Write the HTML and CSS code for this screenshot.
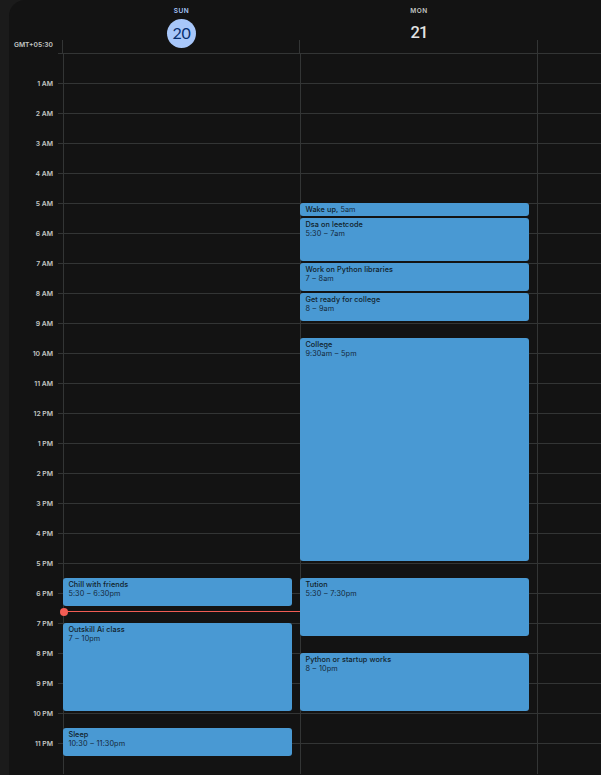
FILE: index.html
```html
<!DOCTYPE html>
<html lang="en">
<head>
<meta charset="utf-8">
<title>Calendar</title>
<link rel="stylesheet" href="styles.css">
</head>
<body>
<main class="calendar">
  <header class="head">
    <div class="zone">GMT+05:30</div>
    <div class="day today"><span class="name">SUN</span><span class="date">20</span></div>
    <div class="day"><span class="name">MON</span><span class="date">21</span></div>
    <div class="day last"></div>
  </header>
  <div class="body">
    <div class="hours">
      <span>1 AM</span><span>2 AM</span><span>3 AM</span><span>4 AM</span><span>5 AM</span><span>6 AM</span><span>7 AM</span><span>8 AM</span><span>9 AM</span><span>10 AM</span><span>11 AM</span><span>12 PM</span><span>1 PM</span><span>2 PM</span><span>3 PM</span><span>4 PM</span><span>5 PM</span><span>6 PM</span><span>7 PM</span><span>8 PM</span><span>9 PM</span><span>10 PM</span><span>11 PM</span>
    </div>
    <div class="stub"></div>
    <div class="column">
      <div class="event" style="grid-row: 36 / span 2"><b>Chill with friends</b><span>5:30 – 6:30pm</span></div>
      <div class="event" style="grid-row: 39 / span 6"><b>Outskill Ai class</b><span>7 – 10pm</span></div>
      <div class="event" style="grid-row: 46 / span 2"><b>Sleep</b><span>10:30 – 11:30pm</span></div>
      <div class="now"></div>
    </div>
    <div class="column">
      <div class="event short" style="grid-row: 11 / span 1"><b>Wake up,</b> <span>5am</span></div>
      <div class="event" style="grid-row: 12 / span 3"><b>Dsa on leetcode</b><span>5:30 – 7am</span></div>
      <div class="event" style="grid-row: 15 / span 2"><b>Work on Python libraries</b><span>7 – 8am</span></div>
      <div class="event" style="grid-row: 17 / span 2"><b>Get ready for college</b><span>8 – 9am</span></div>
      <div class="event" style="grid-row: 20 / span 15"><b>College</b><span>9:30am – 5pm</span></div>
      <div class="event" style="grid-row: 36 / span 4"><b>Tution</b><span>5:30 – 7:30pm</span></div>
      <div class="event" style="grid-row: 41 / span 4"><b>Python or startup works</b><span>8 – 10pm</span></div>
    </div>
    <div class="column"></div>
  </div>
</main>
</body>
</html>
```
FILE: styles.css
```css
* { box-sizing: border-box; }
body {
  margin: 0;
  height: 775px;
  overflow: hidden;
  background: #1b1b1b;
  font-family: Inter, Roboto, sans-serif;
}
.calendar {
  margin-left: 9px;
  height: 775px;
  overflow: hidden;
  background: #131313;
  border-top-left-radius: 16px;
}
.head {
  display: grid;
  grid-template-columns: 53px 237px 238px 1fr;
  height: 53px;
}
.zone {
  padding: 41px 9px 0 0;
  text-align: right;
  font-size: 6.7px;
  line-height: 8px;
  font-weight: 600;
  color: #c4c7c5;
  white-space: nowrap;
}
.day {
  display: flex;
  flex-direction: column;
  align-items: center;
  padding: 6px 0 0 2px;
  background: linear-gradient(#333535, #333535) no-repeat 0 40px / 1px 13px;
}
.name {
  font-size: 6.5px;
  line-height: 10px;
  font-weight: 600;
  letter-spacing: .5px;
  color: #c4c7c5;
}
.date {
  width: 29px;
  height: 29px;
  margin-top: 3px;
  border-radius: 50%;
  font-family: Roboto, sans-serif;
  font-size: 16.5px;
  letter-spacing: -1px;
  line-height: 28px;
  text-align: center;
  color: #e3e3e3;
  font-weight: 500;
}
.today .name { color: #a8c7fa; }
.today .date {
  background: #a8c7fa;
  color: #062e6f;
  font-family: Lato, sans-serif;
  font-size: 16px;
  font-weight: 400;
  letter-spacing: -.2px;
}
.body {
  display: grid;
  grid-template-columns: 49px 5px 237px 237px 1fr;
  height: 721px;
}
.hours {
  display: flex;
  flex-direction: column;
  padding: 16px 5px 0 0;
  text-align: right;
  font-size: 6.8px;
  line-height: 30px;
  font-weight: 600;
  color: #c4c7c5;
}
.stub, .column {
  background: repeating-linear-gradient(#333535 0 1px, transparent 1px 30px) no-repeat 0 0 / 100% 720px;
}
.column {
  position: relative;
  display: grid;
  grid-template-rows: repeat(48, 15px);
  background:
    linear-gradient(#333535, #333535) no-repeat 0 0 / 1px 100%,
    repeating-linear-gradient(#333535 0 1px, transparent 1px 30px) no-repeat 0 0 / 100% 720px;
}
.event {
  display: flex;
  flex-direction: column;
  width: 229px;
  margin-bottom: 2px;
  padding: 2px 5px 2px 5.4px;
  border-radius: 3px;
  background: #4999d3;
  color: #14283a;
  font-size: 7.3px;
  line-height: 9px;
  letter-spacing: .08px;
  white-space: nowrap;
}
.event b { font-weight: 500; color: #101d29; }
.event span { word-spacing: .5px; }
.short { flex-direction: row; gap: 2px; }
.now {
  position: absolute;
  top: 558px;
  left: 0;
  width: 100%;
  height: 1px;
  background: #f25c54;
}
.now::before {
  content: "";
  position: absolute;
  left: -3.5px;
  top: -3px;
  width: 8px;
  height: 8px;
  border-radius: 50%;
  background: #f25c54;
}
```
